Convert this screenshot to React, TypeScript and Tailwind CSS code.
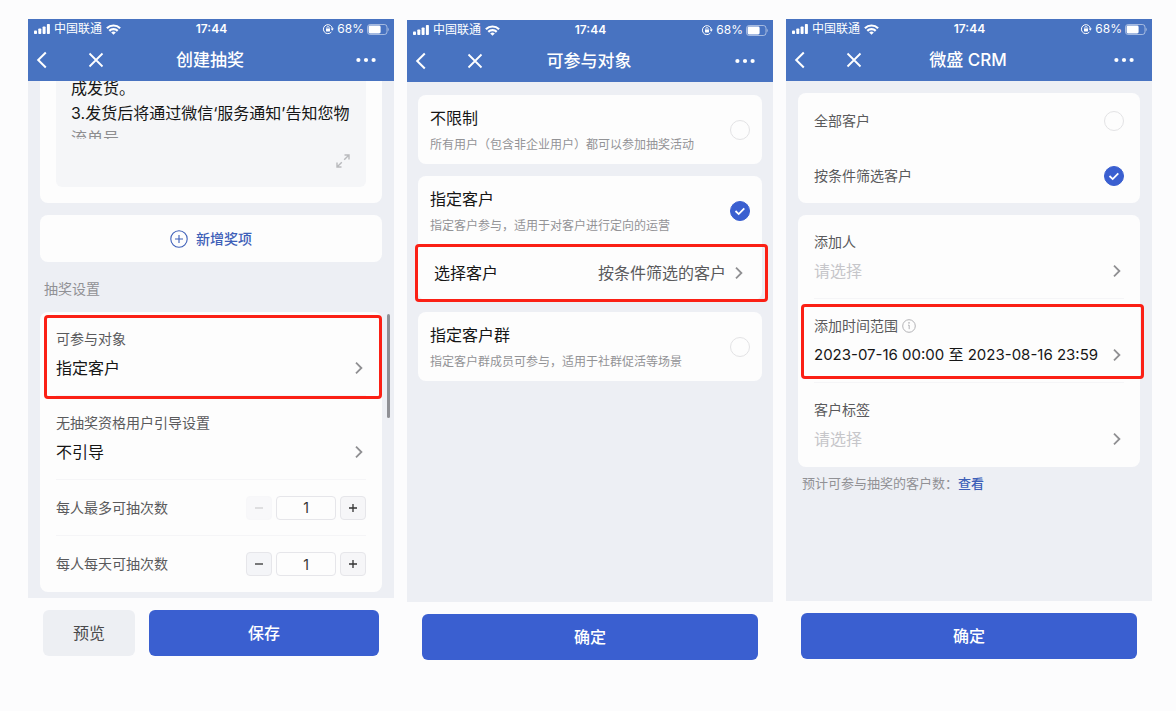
import React, { useState } from "react";

const ChevronIcon = () => (
  <svg viewBox="0 0 14 14" className="h-3.5 w-3.5 shrink-0" fill="none" stroke="#8f8f92" strokeWidth="1.8">
    <path d="M4 1.7 9.400 7 4 12.300" />
  </svg>
);

const SignalIcon = () => (
  <svg viewBox="0 0 16 10" className="h-2.5 w-4" fill="currentColor">
    <rect x="0" y="6.5" width="3" height="3.5" rx="0.8" />
    <rect x="4.3" y="4.5" width="3" height="5.5" rx="0.8" />
    <rect x="8.6" y="2.4" width="3" height="7.6" rx="0.8" />
    <rect x="12.9" y="0" width="3" height="10" rx="0.8" />
  </svg>
);

const WifiIcon = () => (
  <svg viewBox="0 0 15 11" className="h-[11px] w-[15px]" fill="none" stroke="currentColor" strokeWidth="2.2">
    <path d="M0.9 4.2a9.4 9.4 0 0 1 13.2 0" />
    <path d="M3.3 6.9a6 6 0 0 1 8.4 0" />
    <path d="M7.5 10.8 5.2 8.5a3.3 3.3 0 0 1 4.6 0Z" fill="currentColor" stroke="none" />
  </svg>
);

const RotationLockIcon = () => (
  <svg viewBox="0 0 12 12" className="h-3 w-3" fill="none" stroke="currentColor" strokeWidth="1">
    <path d="M9.4 9a4.5 4.5 0 1 1 1-3.2" />
    <path d="M8.6 5.6h3.2l-1.6 2.2Z" fill="currentColor" stroke="none" />
    <rect x="4" y="5.4" width="4" height="3" rx="0.4" fill="currentColor" stroke="none" />
    <path d="M4.8 5.6v-.9a1.2 1.2 0 0 1 2.4 0v.9" strokeWidth="0.8" />
  </svg>
);

const BatteryIcon = () => (
  <svg viewBox="0 0 22 11" className="h-[11px] w-[22px]" fill="none">
    <rect x="0.5" y="0.5" width="19.5" height="10" rx="2.6" stroke="currentColor" strokeOpacity="0.5" />
    <rect x="1.600" y="1.600" width="12" height="7.800" rx="1.4" fill="currentColor" />
    <path d="M20.8 3.8c1.3.4 1.3 3 0 3.4Z" fill="currentColor" fillOpacity="0.5" />
  </svg>
);

const PhoneHeader = ({ title }: { title: string }) => (
  <header className="bg-[#4873c1] text-white">
    <div className="grid h-5 grid-cols-3 items-center pl-1.5 pr-[5px] text-xs">
      <div className="flex items-center gap-1">
        <SignalIcon />
        <span>中国联通</span>
        <WifiIcon />
      </div>
      <span className="text-center font-semibold">17:44</span>
      <div className="flex items-center justify-end gap-[3px]">
        <RotationLockIcon />
        <span>68%</span>
        <BatteryIcon />
      </div>
    </div>
    <div className="grid h-[42px] grid-cols-3 items-center pl-2 pr-2.5">
      <div className="flex items-center gap-10">
        <button type="button" aria-label="返回">
          <svg viewBox="0 0 12 18" className="h-[18px] w-3" fill="none" stroke="currentColor" strokeWidth="2">
            <path d="M9.8 1.5 2.2 9l7.6 7.5" />
          </svg>
        </button>
        <button type="button" aria-label="关闭">
          <svg viewBox="0 0 16 16" className="h-4 w-4" fill="none" stroke="currentColor" strokeWidth="1.8">
            <path d="m1.5 1.5 13 13M14.5 1.5l-13 13" />
          </svg>
        </button>
      </div>
      <h1 className="whitespace-nowrap text-center text-[17px] font-medium leading-6">{title}</h1>
      <button type="button" aria-label="更多" className="justify-self-end px-2">
        <svg viewBox="0 0 20 6" className="h-1.5 w-5" fill="currentColor">
          <circle cx="2.4" cy="3" r="2.1" />
          <circle cx="10" cy="3" r="2.1" />
          <circle cx="17.6" cy="3" r="2.1" />
        </svg>
      </button>
    </div>
  </header>
);

const Highlight = ({ className }: { className: string }) => (
  <div className={`pointer-events-none absolute rounded-[4px] border-3 border-[#fb2015] ${className}`} />
);

type RadioProps = { id: string; name: string; checked: boolean; onChange: () => void };

const Radio = ({ id, name, checked, onChange }: RadioProps) => (
  <span className="grid shrink-0 place-items-center">
    <input
      id={id}
      name={name}
      type="radio"
      checked={checked}
      onChange={onChange}
      className="col-start-1 row-start-1 h-5 w-5 appearance-none rounded-full border border-[#e3e3e5] checked:border-[#3a5fd0] checked:bg-[#3a5fd0]"
    />
    {checked && (
      <svg viewBox="0 0 12 12" className="pointer-events-none col-start-1 row-start-1 h-3 w-3" fill="none" stroke="#fff" strokeWidth="1.8">
        <path d="m1.5 6 3.2 3.1 5.6-5.8" />
      </svg>
    )}
  </span>
);

type FieldProps = {
  label: string;
  value: string;
  empty?: boolean;
  info?: boolean;
  last?: boolean;
};

const Field = ({ label, value, empty, info, last }: FieldProps) => (
  <button
    type="button"
    className={`flex min-h-[84px] w-full flex-col justify-center gap-1.5 text-left ${last ? "" : "border-b border-[#f5f5f7]"}`}
  >
    <span className="flex items-center gap-1 text-sm leading-[22px] text-[#5a5a5c]">
      {label}
      {info && (
        <svg viewBox="0 0 14 14" className="h-3.5 w-3.5" fill="none" stroke="#b3b3b6">
          <circle cx="7" cy="7" r="6.3" />
          <path d="M6 6.2h1.200v4" />
          <circle cx="7" cy="3.9" r="0.8" fill="#b3b3b6" stroke="none" />
        </svg>
      )}
    </span>
    <span className="flex w-full items-center justify-between leading-6">
      <span
        className={`whitespace-nowrap ${empty ? "text-[#c6c6ca]" : "text-[#161616]"} ${info ? "text-[15px]" : ""}`}
      >
        {value}
      </span>
      <ChevronIcon />
    </span>
  </button>
);

type StepperProps = { id: string; label: string; min: number; last?: boolean };

const Stepper = ({ id, label, min, last }: StepperProps) => {
  const [count, setCount] = useState(1);
  const disabled = count <= min;

  return (
    <div className={`flex min-h-14 items-center justify-between ${last ? "" : "border-b border-[#f5f5f7]"}`}>
      <label htmlFor={id} className="text-sm text-[#5a5a5c]">
        {label}
      </label>
      <div className="flex gap-1">
        <button
          type="button"
          aria-label="减少"
          disabled={disabled}
          onClick={() => setCount(count - 1)}
          className="grid h-6 w-[26px] place-items-center rounded-[4px] border border-[#e6e6ea] bg-[#f4f5f8] text-[#333] disabled:border-[#f7f7f9] disabled:bg-[#f8f8fa] disabled:text-[#cfcfd2]"
        >
          <svg viewBox="0 0 10 10" className="h-2.5 w-2.5" stroke="currentColor" strokeWidth="1.3">
            <path d="M1 5h8" />
          </svg>
        </button>
        <input
          id={id}
          value={count}
          onChange={(e) => setCount(Number(e.target.value) || 1)}
          className="h-6 w-[60px] rounded-[4px] border border-[#e6e6ea] bg-[#fdfdfd] text-center text-sm text-[#333]"
        />
        <button
          type="button"
          aria-label="增加"
          onClick={() => setCount(count + 1)}
          className="grid h-6 w-[26px] place-items-center rounded-[4px] border border-[#e6e6ea] bg-[#f6f6f8] text-[#333]"
        >
          <svg viewBox="0 0 10 10" className="h-2.5 w-2.5" stroke="currentColor" strokeWidth="1.3">
            <path d="M1 5h8M5 1v8" />
          </svg>
        </button>
      </div>
    </div>
  );
};

const ConfirmFooter = () => (
  <footer className="px-[15px] pt-3">
    <button type="button" className="h-[46px] w-full rounded-md bg-[#3a5fd0] font-medium text-white">
      确定
    </button>
  </footer>
);

const CreateLottery = () => (
  <section>
    <PhoneHeader title="创建抽奖" />
    <main className="relative overflow-hidden bg-[#edeff4] px-3 pb-1.5">
      <div className="rounded-b-lg bg-[#fdfdfd] px-4 pb-4">
        <div className="flex flex-col rounded-b-md bg-[#f5f6f8] px-[15px] pb-[18px]">
          <div className="h-[58px] overflow-hidden leading-[25px] text-[#161616]">
            <p className="-mt-[5px]">成发货。</p>
            <p className="whitespace-nowrap">3.发货后将通过微信‘服务通知’告知您物</p>
            <p className="text-[#8e8e90]">流单号</p>
          </div>
          <button type="button" aria-label="展开" className="mt-3.5 self-end">
            <svg viewBox="0 0 16 16" className="h-4 w-4" fill="none" stroke="#b9babd" strokeWidth="1.4">
              <path d="M9.5 2H14v4.500M14 2 9.200 6.800M6.500 14H2V9.500M2 14l4.800-4.800" />
            </svg>
          </button>
        </div>
      </div>

      <button
        type="button"
        className="mt-3 flex h-[47px] w-full items-center justify-center gap-2 rounded-lg bg-[#fdfdfd] text-sm font-medium text-[#3d5fb8]"
      >
        <svg viewBox="0 0 18 18" className="h-[18px] w-[18px]" fill="none" stroke="currentColor" strokeWidth="1.1">
          <circle cx="9" cy="9" r="8.2" />
          <path d="M5 9h8M9 5v8" />
        </svg>
        新增奖项
      </button>

      <h2 className="flex h-[50px] items-center px-1 pt-1 text-sm text-[#919195]">抽奖设置</h2>

      <div className="relative rounded-lg bg-[#fdfdfd] px-4">
        <Field label="可参与对象" value="指定客户" />
        <Field label="无抽奖资格用户引导设置" value="不引导" />
        <Stepper id="max-total" label="每人最多可抽次数" min={1} />
        <Stepper id="max-daily" label="每人每天可抽次数" min={0} last />
        <Highlight className="left-1 right-0 top-[3px] h-[84px]" />
      </div>
      <div className="absolute right-1 top-[233px] h-[104px] w-[3px] rounded-full bg-[#8f9095]" />
    </main>
    <footer className="flex gap-3.5 px-[15px] pt-3">
      <button type="button" className="h-[46px] w-[92px] rounded-md bg-[#edeff3] text-[#4a4a4c]">
        预览
      </button>
      <button type="button" className="h-[46px] flex-1 rounded-md bg-[#3a5fd0] font-medium text-white">
        保存
      </button>
    </footer>
  </section>
);

const audiences = [
  { id: "all", title: "不限制", desc: "所有用户（包含非企业用户）都可以参加抽奖活动" },
  { id: "customer", title: "指定客户", desc: "指定客户参与，适用于对客户进行定向的运营" },
  { id: "group", title: "指定客户群", desc: "指定客户群成员可参与，适用于社群促活等场景" },
];

const Audience = () => {
  const [selected, setSelected] = useState("customer");

  return (
    <section className="mt-px">
      <PhoneHeader title="可参与对象" />
      <main className="flex min-h-[520px] flex-col gap-3 bg-[#edeff4] px-[11px] pt-[13px]">
        {audiences.map((item) => (
          <div key={item.id} className="relative rounded-lg bg-[#fdfdfd]">
            <label htmlFor={item.id} className="flex items-center justify-between px-3 py-[11px]">
              <span className="flex flex-col gap-[7px]">
                <span className="leading-6 text-[#161616]">{item.title}</span>
                <span className="whitespace-nowrap text-xs leading-4 text-[#939396]">{item.desc}</span>
              </span>
              <Radio
                id={item.id}
                name="audience"
                checked={selected === item.id}
                onChange={() => setSelected(item.id)}
              />
            </label>
            {item.id === "customer" && (
              <>
                <button type="button" className="flex h-[55px] w-full items-center justify-between px-4">
                  <span className="text-[#161616]">选择客户</span>
                  <span className="flex items-center gap-1.5 text-[#5a5a5c]">
                    按条件筛选的客户
                    <ChevronIcon />
                  </span>
                </button>
                <Highlight className="-bottom-0.5 -left-[3px] -right-1.5 h-[58px]" />
              </>
            )}
          </div>
        ))}
      </main>
      <ConfirmFooter />
    </section>
  );
};

const CustomerFilter = () => {
  const [mode, setMode] = useState("filter");

  return (
    <section>
      <PhoneHeader title="微盛 CRM" />
      <main className="min-h-[520px] bg-[#edeff4] px-3 pt-3">
        <div className="rounded-lg bg-[#fdfdfd] px-4 text-sm text-[#5a5a5c]">
          <label htmlFor="mode-all" className="flex h-[55px] items-center justify-between">
            全部客户
            <Radio id="mode-all" name="mode" checked={mode === "all"} onChange={() => setMode("all")} />
          </label>
          <label htmlFor="mode-filter" className="flex h-[55px] items-center justify-between">
            按条件筛选客户
            <Radio id="mode-filter" name="mode" checked={mode === "filter"} onChange={() => setMode("filter")} />
          </label>
        </div>
        <div className="relative mt-3 rounded-lg bg-[#fdfdfd] px-4">
          <Field label="添加人" value="请选择" empty />
          <Field label="添加时间范围" value="2023-07-16 00:00 至 2023-08-16 23:59" info />
          <Field label="客户标签" value="请选择" empty last />
          <Highlight className="-right-1 left-[3px] top-[89px] h-[75px]" />
        </div>
        <p className="px-1 pt-1.5 text-[13px] leading-5 text-[#919195]">
          预计可参与抽奖的客户数：
          <a href="#customers" className="font-medium text-[#3d5fb8]">
            查看
          </a>
        </p>
      </main>
      <ConfirmFooter />
    </section>
  );
};

const App = () => {
  return (
    <div className="grid min-h-screen grid-cols-3 items-start gap-[13px] bg-[#fcfcfd] pl-7 pr-6 pt-[19px] font-[Inter,'Noto_Sans_CJK_SC',sans-serif]">
      <CreateLottery />
      <Audience />
      <CustomerFilter />
    </div>
  );
};

export default App;
